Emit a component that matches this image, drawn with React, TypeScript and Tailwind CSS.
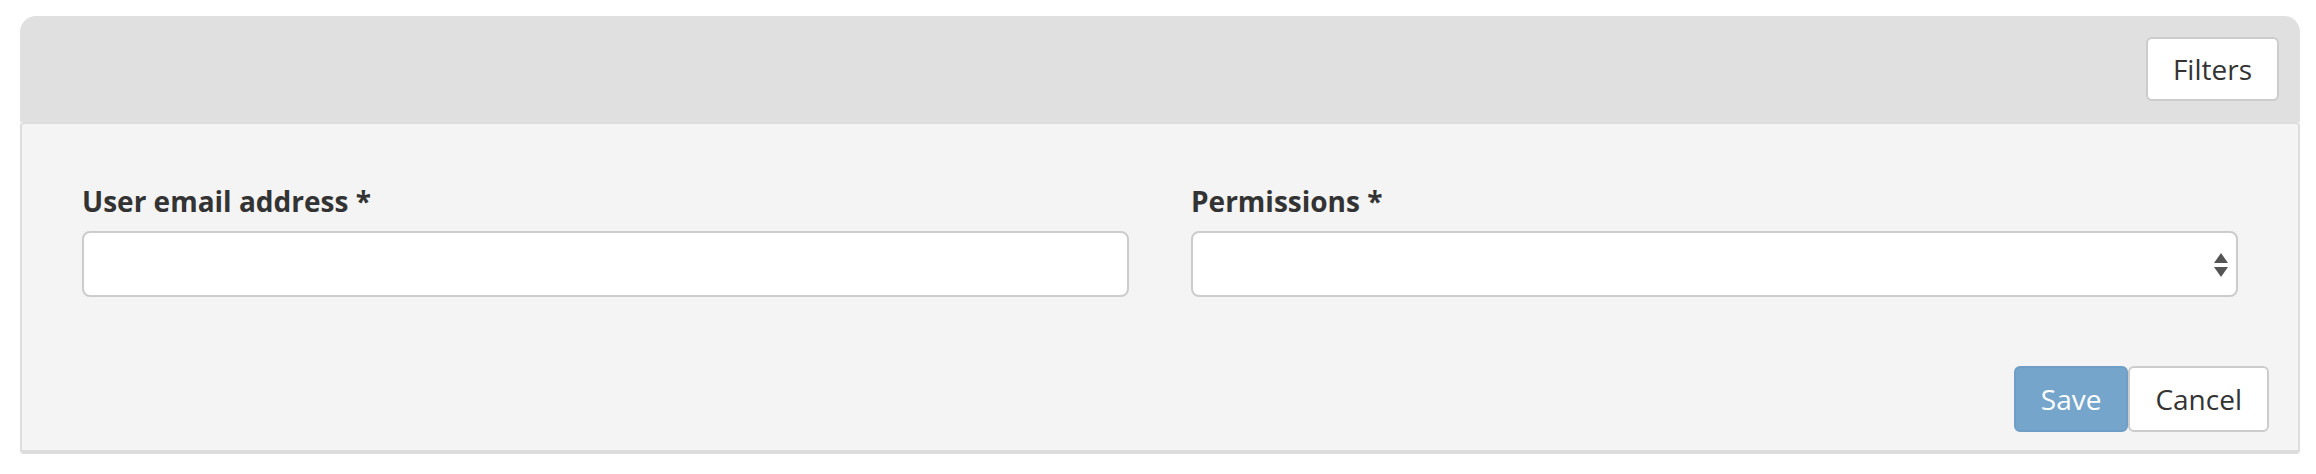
export default function App() {
  return (
    <div
      className="min-h-screen bg-white pt-[16px] pl-[20px] pr-[16px]"
      style={{ fontFamily: '"Open Sans", "Liberation Sans", sans-serif' }}
    >
      {/* Header bar */}
      <div className="flex h-[106px] items-center justify-end rounded-t-[16px] bg-[#e0e0e0] pr-[21px]">
        <button className="h-[64px] rounded-[6px] border-2 border-[#cccccc] bg-white px-[25px] text-[28px] text-[#333333]">
          Filters
        </button>
      </div>

      {/* Form panel */}
      <div className="rounded-[4px] border-2 border-[#dddddd] border-b-[4px] bg-[#f4f4f4]">
        <div className="grid grid-cols-2 gap-x-[62px] px-[60px] pt-[57px]">
          <div>
            <label className="mb-[10px] block text-[28px] font-bold leading-[40px] text-[#333333]">
              User email address *
            </label>
            <input className="block h-[66px] w-full rounded-[8px] border-2 border-[#cccccc] bg-white px-[24px] text-[28px] outline-none" />
          </div>
          <div>
            <label className="mb-[10px] block text-[28px] font-bold leading-[40px] text-[#333333]">
              Permissions *
            </label>
            <div className="relative h-[66px] w-full rounded-[8px] border-2 border-[#cccccc] bg-white">
              <svg
                className="absolute right-[8px] top-[20px]"
                width="14"
                height="25"
                viewBox="0 0 14 25"
              >
                <polygon points="7,0 14,10 0,10" fill="#555555" />
                <polygon points="0,14 14,14 7,24" fill="#555555" />
              </svg>
            </div>
          </div>
        </div>
        <div className="flex justify-end px-[29px] pt-[69px] pb-[18px]">
          <button className="h-[66px] rounded-[6px] border-2 border-[#6f9ec6] bg-[#76a5cc] px-[25px] text-[28px] text-white">
            Save
          </button>
          <button className="h-[66px] rounded-[6px] border-2 border-[#cccccc] bg-white px-[25px] text-[28px] text-[#333333]">
            Cancel
          </button>
        </div>
      </div>
    </div>
  );
}
